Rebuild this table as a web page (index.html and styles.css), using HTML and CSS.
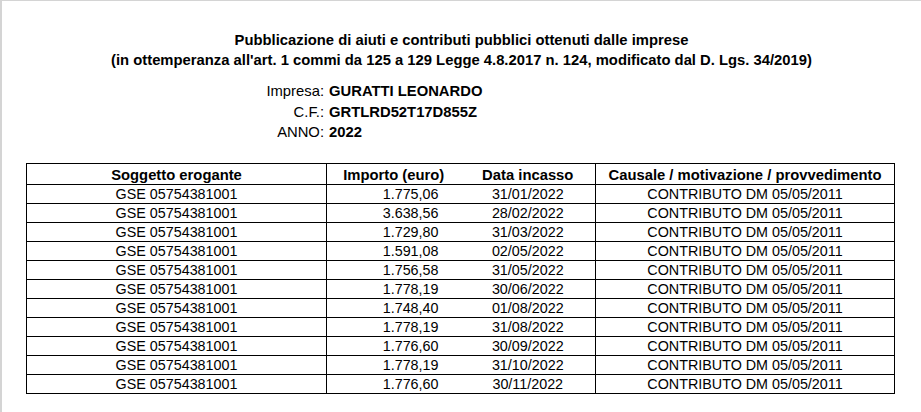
FILE: index.html
```html
<!DOCTYPE html>
<html lang="it">
<head>
<meta charset="utf-8">
<title>Pubblicazione di aiuti e contributi pubblici</title>
<link rel="stylesheet" href="styles.css">
</head>
<body>
<div class="page">
  <div class="title">
    <div>Pubblicazione di aiuti e contributi pubblici ottenuti dalle imprese</div>
    <div>(in ottemperanza all'art. 1 commi da 125 a 129 Legge 4.8.2017 n. 124, modificato dal D. Lgs. 34/2019)</div>
  </div>
  <div class="info">
    <div class="label">Impresa:</div><div class="value">GURATTI LEONARDO</div>
    <div class="label">C.F.:</div><div class="value">GRTLRD52T17D855Z</div>
    <div class="label">ANNO:</div><div class="value">2022</div>
  </div>
  <table class="aiuti">
    <colgroup>
      <col class="c1"><col class="c2"><col class="c3"><col class="c4">
    </colgroup>
    <thead>
      <tr>
        <th class="b-right">Soggetto erogante</th>
        <th>Importo (euro)</th>
        <th class="b-right">Data incasso</th>
        <th>Causale / motivazione / provvedimento</th>
      </tr>
    </thead>
    <tbody>
      <tr><td class="b-right">GSE 05754381001</td><td class="num">1.775,06</td><td class="b-right">31/01/2022</td><td>CONTRIBUTO DM 05/05/2011</td></tr>
      <tr><td class="b-right">GSE 05754381001</td><td class="num">3.638,56</td><td class="b-right">28/02/2022</td><td>CONTRIBUTO DM 05/05/2011</td></tr>
      <tr><td class="b-right">GSE 05754381001</td><td class="num">1.729,80</td><td class="b-right">31/03/2022</td><td>CONTRIBUTO DM 05/05/2011</td></tr>
      <tr><td class="b-right">GSE 05754381001</td><td class="num">1.591,08</td><td class="b-right">02/05/2022</td><td>CONTRIBUTO DM 05/05/2011</td></tr>
      <tr><td class="b-right">GSE 05754381001</td><td class="num">1.756,58</td><td class="b-right">31/05/2022</td><td>CONTRIBUTO DM 05/05/2011</td></tr>
      <tr><td class="b-right">GSE 05754381001</td><td class="num">1.778,19</td><td class="b-right">30/06/2022</td><td>CONTRIBUTO DM 05/05/2011</td></tr>
      <tr><td class="b-right">GSE 05754381001</td><td class="num">1.748,40</td><td class="b-right">01/08/2022</td><td>CONTRIBUTO DM 05/05/2011</td></tr>
      <tr><td class="b-right">GSE 05754381001</td><td class="num">1.778,19</td><td class="b-right">31/08/2022</td><td>CONTRIBUTO DM 05/05/2011</td></tr>
      <tr><td class="b-right">GSE 05754381001</td><td class="num">1.776,60</td><td class="b-right">30/09/2022</td><td>CONTRIBUTO DM 05/05/2011</td></tr>
      <tr><td class="b-right">GSE 05754381001</td><td class="num">1.778,19</td><td class="b-right">31/10/2022</td><td>CONTRIBUTO DM 05/05/2011</td></tr>
      <tr><td class="b-right">GSE 05754381001</td><td class="num">1.776,60</td><td class="b-right">30/11/2022</td><td>CONTRIBUTO DM 05/05/2011</td></tr>
    </tbody>
  </table>
</div>
</body>
</html>
```
FILE: styles.css
```css
html, body {
  margin: 0;
  padding: 0;
  background: #ffffff;
}

.page {
  box-sizing: border-box;
  width: 921px;
  height: 412px;
  border-top: 1px solid #d4d4d4;
  border-left: 2px solid #d4d4d4;
  font-family: "Liberation Sans", Arial, sans-serif;
  font-size: 14.33px;
  color: #000000;
  overflow: hidden;
}

.title {
  padding-top: 29px;
  font-size: 14.8px;
  font-weight: bold;
  text-align: center;
  line-height: 20px;
}

.info {
  display: grid;
  grid-template-columns: 322px auto;
  column-gap: 5px;
  row-gap: 0;
  margin-top: 11px;
  font-size: 14.8px;
  line-height: 20.5px;
}

.info .label {
  text-align: right;
}

.info .value {
  font-weight: bold;
}

.aiuti {
  margin-top: 20px;
  margin-left: 24px;
  border-collapse: collapse;
  table-layout: fixed;
  width: 869px;
  border: 1px solid #000000;
}

.aiuti .c1 { width: 300px; }
.aiuti .c2 { width: 134px; }
.aiuti .c3 { width: 135px; }
.aiuti .c4 { width: 299px; }

.aiuti th,
.aiuti td {
  padding: 0;
  text-align: center;
  white-space: nowrap;
  border-bottom: 1px solid #000000;
}

.aiuti th {
  height: 20px;
  font-size: 14.8px;
  font-weight: bold;
  vertical-align: bottom;
  line-height: 18px;
}

.aiuti td {
  height: 18px;
  line-height: 17px;
  vertical-align: bottom;
}

.aiuti .b-right {
  border-right: 1px solid #000000;
}

.aiuti td.num {
  text-align: right;
  padding-right: 22px;
}
```
